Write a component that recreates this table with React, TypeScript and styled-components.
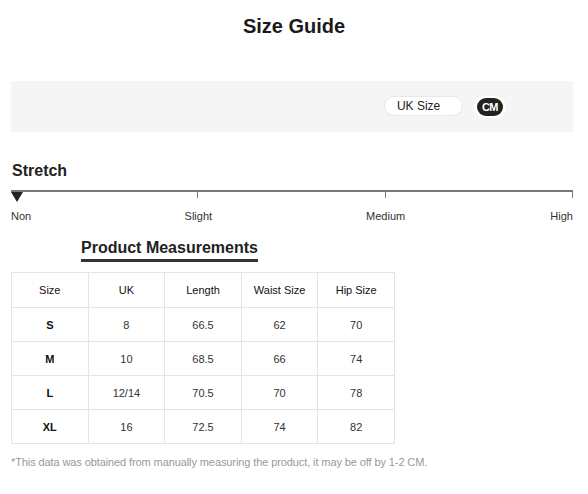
import React from "react";
import styled, { createGlobalStyle } from "styled-components";

const Global = createGlobalStyle`
  html, body { margin: 0; padding: 0; background: #fff; }
  body { font-family: "Liberation Sans", Arial, sans-serif; color: #222; }
`;

const Page = styled.div`
  width: 588px;
  padding: 14px 15px 0 11px;
  box-sizing: border-box;
`;

const Title = styled.h1`
  margin: 0;
  text-align: center;
  font-size: 20px;
  line-height: 24px;
  font-weight: bold;
  color: #1a1a1a;
  padding-left: 4px;
`;

const UnitBar = styled.div`
  margin-top: 43px;
  height: 51px;
  background: #f6f5f6;
  display: flex;
  align-items: center;
  justify-content: flex-end;
  padding-right: 67px;
  gap: 11px;
`;

const SizePill = styled.div`
  width: 79px;
  height: 20px;
  box-sizing: border-box;
  border: 1px solid #e8e8e8;
  border-radius: 10px;
  background: #fff;
  font-size: 12px;
  color: #222;
  display: flex;
  align-items: center;
  padding-left: 12px;
  margin-top: -2px;
`;

const UnitWrap = styled.div`
  height: 22px;
  padding: 0 3px;
  border-radius: 11px;
  background: #fff;
  display: flex;
  align-items: center;
`;

const UnitChip = styled.div`
  height: 18px;
  padding: 0 5px;
  border-radius: 9px;
  background: #222;
  color: #fff;
  font-size: 11px;
  font-weight: bold;
  display: flex;
  align-items: center;
  letter-spacing: -0.5px;
`;

const SectionTitle = styled.h2`
  margin: 29px 0 0 1px;
  font-size: 16px;
  line-height: 20px;
  font-weight: bold;
  color: #222;
`;

const Scale = styled.div`
  margin-top: 9px;
  display: grid;
  grid-template-columns: repeat(3, 1fr);
  border-top: 2px solid #777;
`;

const Tick = styled.div`
  height: 10px;
  position: relative;
  &::after {
    content: "";
    position: absolute;
    right: 0;
    top: 0;
    width: 1px;
    height: 6px;
    background: #777;
  }
`;

const Marker = styled.div`
  width: 0;
  height: 0;
  border-left: 6px solid transparent;
  border-right: 6px solid transparent;
  border-top: 10px solid #222;
`;

const Labels = styled.div`
  margin-top: 8px;
  display: grid;
  grid-template-columns: repeat(6, 1fr);
  font-size: 11px;
  line-height: 13px;
  color: #333;
`;

const Label = styled.span<{ $col: string; $align: string }>`
  grid-column: ${(p) => p.$col};
  text-align: ${(p) => p.$align};
`;

const MeasureTitle = styled.h3`
  margin: 15px 0 0 70px;
  display: inline-block;
  font-size: 16px;
  line-height: 20px;
  font-weight: bold;
  color: #222;
  padding-bottom: 1px;
  border-bottom: 3px solid #333;
`;

const Table = styled.table`
  margin-top: 10px;
  border-collapse: collapse;
  width: 384px;
  table-layout: fixed;
  font-size: 11px;
`;

const Th = styled.th`
  height: 34px;
  border: 1px solid #e4e4e4;
  font-weight: normal;
  color: #111;
  padding: 0;
`;

const Td = styled.td<{ $bold?: boolean }>`
  height: 33px;
  border: 1px solid #e4e4e4;
  text-align: center;
  padding: 0;
  color: ${(p) => (p.$bold ? "#111" : "#333")};
  font-weight: ${(p) => (p.$bold ? "bold" : "normal")};
`;

const Note = styled.p`
  margin: 12px 0 0 0;
  font-size: 11px;
  color: #999;
  letter-spacing: -0.1px;
`;

const rows = [
  ["S", "8", "66.5", "62", "70"],
  ["M", "10", "68.5", "66", "74"],
  ["L", "12/14", "70.5", "70", "78"],
  ["XL", "16", "72.5", "74", "82"],
];

export default function App() {
  return (
    <Page>
      <Global />
      <Title>Size Guide</Title>
      <UnitBar>
        <SizePill>UK Size</SizePill>
        <UnitWrap>
          <UnitChip>CM</UnitChip>
        </UnitWrap>
      </UnitBar>
      <SectionTitle>Stretch</SectionTitle>
      <Scale>
        <Tick>
          <Marker />
        </Tick>
        <Tick />
        <Tick />
      </Scale>
      <Labels>
        <Label $col="1 / 2" $align="left">Non</Label>
        <Label $col="2 / 4" $align="center">Slight</Label>
        <Label $col="4 / 6" $align="center">Medium</Label>
        <Label $col="6 / 7" $align="right">High</Label>
      </Labels>
      <MeasureTitle>Product Measurements</MeasureTitle>
      <Table>
        <thead>
          <tr>
            <Th>Size</Th>
            <Th>UK</Th>
            <Th>Length</Th>
            <Th>Waist Size</Th>
            <Th>Hip Size</Th>
          </tr>
        </thead>
        <tbody>
          {rows.map((r) => (
            <tr key={r[0]}>
              {r.map((c, i) => (
                <Td key={i} $bold={i === 0}>
                  {c}
                </Td>
              ))}
            </tr>
          ))}
        </tbody>
      </Table>
      <Note>*This data was obtained from manually measuring the product, it may be off by 1-2 CM.</Note>
    </Page>
  );
}
